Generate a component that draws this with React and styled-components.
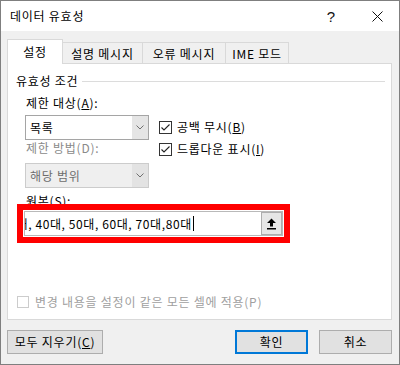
import React from 'react';
import styled, { createGlobalStyle } from 'styled-components';

const Global = createGlobalStyle`
  html, body { margin: 0; padding: 0; background: #ffffff; }
  body {
    font-family: "Noto Sans CJK KR", "Noto Sans", sans-serif;
    font-size: 12px;
    letter-spacing: 0.75px;
    color: #000;
  }
  * { box-sizing: border-box; }
`;

const Window = styled.div`
  width: 400px;
  height: 365px;
  border: 1px solid #7f7f7f;
  background: #f0f0f0;
  display: flex;
  flex-direction: column;
`;

const TitleBar = styled.div`
  height: 30px;
  background: #ffffff;
  display: flex;
  align-items: center;
  padding-left: 9px;
`;

const Title = styled.div`
  flex: 1;
  font-size: 12px;
  line-height: 16px;
`;

const TitleButton = styled.div`
  width: ${(p) => p.$w}px;
  height: 30px;
  display: flex;
  align-items: center;
  justify-content: center;
  font-family: "Liberation Sans", sans-serif;
  font-size: 15px;
  letter-spacing: 0;
  color: #111;
`;

const Body = styled.div`
  flex: 1;
  display: flex;
  flex-direction: column;
  padding: 8px 7px 0 6px;
`;

const TabStrip = styled.div`
  height: 24px;
  display: flex;
  align-items: flex-end;
  position: relative;
  z-index: 1;
`;

const Tab = styled.div`
  width: ${(p) => p.$w}px;
  height: ${(p) => (p.$active ? 25 : 21)}px;
  margin-bottom: ${(p) => (p.$active ? -1 : 0)}px;
  margin-left: ${(p) => (p.$first ? 0 : -1)}px;
  border: 1px solid #d9d9d9;
  border-bottom: none;
  background: ${(p) => (p.$active ? '#ffffff' : '#f0f0f0')};
  position: relative;
  z-index: ${(p) => (p.$active ? 2 : 1)};
  display: flex;
  align-items: center;
  justify-content: center;
  line-height: 16px;
  padding-top: ${(p) => (p.$active ? 0 : 1)}px;
  white-space: nowrap;
`;

const Panel = styled.div`
  height: 257px;
  border: 1px solid #d9d9d9;
  background: #ffffff;
  display: flex;
  flex-direction: column;
`;

const GroupHeader = styled.div`
  margin: 9px 6px 0 8px;
  height: 16px;
  display: flex;
  align-items: center;
  line-height: 16px;
`;

const GroupLine = styled.div`
  flex: 1;
  height: 1px;
  background: #dcdcdc;
  margin-left: 4px;
`;

const Row = styled.div`
  display: flex;
  margin-left: 17px;
`;

const LeftCol = styled.div`
  width: 124px;
  display: flex;
  flex-direction: column;
`;

const RightCol = styled.div`
  margin-left: 10px;
  display: flex;
  flex-direction: column;
`;

const FieldLabel = styled.div`
  line-height: 16px;
  height: 16px;
  padding-left: 1px;
  margin-top: ${(p) => p.$mt || 0}px;
  margin-left: ${(p) => p.$ml || 0}px;
  color: ${(p) => (p.$disabled ? '#8a8a8a' : '#000')};
  white-space: nowrap;
`;

const Key = styled.span`
  text-decoration: underline;
  text-underline-offset: 1px;
`;

const Combo = styled.div`
  height: 25px;
  margin-top: ${(p) => p.$mt || 0}px;
  border: 1px solid ${(p) => (p.$disabled ? '#cccccc' : '#a5a5a5')};
  background: ${(p) => (p.$disabled ? '#efefef' : '#ffffff')};
  display: flex;
`;

const ComboText = styled.div`
  flex: 1;
  padding-left: 4px;
  line-height: 23px;
  color: ${(p) => (p.$disabled ? '#6d6d6d' : '#000')};
`;

const ComboButton = styled.div`
  width: 16px;
  background: ${(p) => (p.$disabled ? '#e3e3e3' : '#e5e5e5')};
  display: flex;
  align-items: center;
  justify-content: center;
`;

const CheckRow = styled.label`
  display: flex;
  align-items: center;
  height: 16px;
  margin-top: ${(p) => p.$mt || 0}px;
  margin-left: ${(p) => p.$ml || 0}px;
  color: ${(p) => (p.$disabled ? '#a0a0a0' : '#000')};
  white-space: nowrap;
  line-height: 16px;
`;

const Box = styled.span`
  width: ${(p) => p.$size}px;
  height: ${(p) => p.$size}px;
  border: 1px solid ${(p) => (p.$disabled ? '#cccccc' : '#333333')};
  background: #ffffff;
  margin-right: ${(p) => p.$gap}px;
  display: flex;
  align-items: center;
  justify-content: center;
  flex: none;
`;

const RedFrame = styled.div`
  margin: -5px 0 0 9px;
  width: 273px;
  border: 6px solid #ff0000;
  padding: 1px;
  background: #ffffff;
  position: relative;
`;

const Input = styled.div`
  height: 25px;
  border: 1px solid #b9b9b9;
  display: flex;
`;

const InputText = styled.div`
  flex: 1;
  overflow: hidden;
  white-space: nowrap;
  line-height: 23px;
  display: flex;
  align-items: center;
`;

const Scrolled = styled.span`
  margin-left: -23px;
  letter-spacing: 0.6px;
  display: inline-flex;
  align-items: center;
`;

const Caret = styled.span`
  width: 1px;
  height: 15px;
  background: #000;
  margin-left: 1px;
`;

const UploadButton = styled.div`
  width: 21px;
  border: 1px solid #adadad;
  background: #e6e6e6;
  display: flex;
  align-items: center;
  justify-content: center;
`;

const Footer = styled.div`
  display: flex;
  margin-top: 10px;
`;

const Button = styled.div`
  width: ${(p) => p.$w}px;
  height: 24px;
  margin-left: ${(p) => p.$ml || '0px'};
  border: ${(p) => (p.$default ? '2px solid #0078d7' : '1px solid #adadad')};
  background: #e1e1e1;
  display: flex;
  align-items: center;
  justify-content: center;
  line-height: 16px;
  white-space: nowrap;
`;

const Chevron = () => (
  <svg width="8" height="5" viewBox="0 0 8 5">
    <path d="M0.5 0.5 L4 4 L7.5 0.5" fill="none" stroke="#707070" strokeWidth="1" />
  </svg>
);

const Check = () => (
  <svg width="11" height="11" viewBox="0 0 11 11">
    <path d="M1.5 5.5 L4 8 L9.5 2.5" fill="none" stroke="#222" strokeWidth="1.1" />
  </svg>
);

const UpArrow = () => (
  <svg width="11" height="12" viewBox="0 0 11 12">
    <path d="M5.5 0.5 L10 5 L7 5 L7 8.5 L4 8.5 L4 5 L1 5 Z" fill="#000" />
    <rect x="1" y="10" width="9" height="1.5" fill="#000" />
  </svg>
);

const CloseIcon = () => (
  <svg width="11" height="11" viewBox="0 0 11 11">
    <path d="M0.5 0.5 L10.5 10.5 M10.5 0.5 L0.5 10.5" stroke="#111" strokeWidth="1" />
  </svg>
);

export default function App() {
  return (
    <>
      <Global />
      <Window>
        <TitleBar>
          <Title>데이터 유효성</Title>
          <TitleButton $w={48}>?</TitleButton>
          <TitleButton $w={44}><CloseIcon /></TitleButton>
        </TitleBar>
        <Body>
          <TabStrip>
            <Tab $w={56} $active $first>설정</Tab>
            <Tab $w={81}>설명 메시지</Tab>
            <Tab $w={84}>오류 메시지</Tab>
            <Tab $w={64}>IME 모드</Tab>
          </TabStrip>
          <Panel>
            <GroupHeader>
              유효성 조건
              <GroupLine />
            </GroupHeader>
            <Row>
              <LeftCol>
                <FieldLabel $mt={6}>제한 대상(<Key>A</Key>):</FieldLabel>
                <Combo $mt={4}>
                  <ComboText>목록</ComboText>
                  <ComboButton><Chevron /></ComboButton>
                </Combo>
                <FieldLabel $disabled>제한 방법(D):</FieldLabel>
                <Combo $mt={7} $disabled>
                  <ComboText $disabled>해당 범위</ComboText>
                  <ComboButton $disabled><Chevron /></ComboButton>
                </Combo>
              </LeftCol>
              <RightCol>
                <CheckRow $mt={30}>
                  <Box $size={13} $gap={5}><Check /></Box>
                  공백 무시(<Key>B</Key>)
                </CheckRow>
                <CheckRow $mt={6}>
                  <Box $size={13} $gap={5}><Check /></Box>
                  드롭다운 표시(<Key>I</Key>)
                </CheckRow>
              </RightCol>
            </Row>
            <FieldLabel $mt={5} $ml={17}>원본(<Key>S</Key>):</FieldLabel>
            <RedFrame>
              <Input>
                <InputText>
                  <Scrolled>
                    30대, 40대, 50대, 60대, 70대,80대
                    <Caret />
                  </Scrolled>
                </InputText>
                <UploadButton><UpArrow /></UploadButton>
              </Input>
            </RedFrame>
            <CheckRow $mt={51} $ml={9} $disabled>
              <Box $size={12} $gap={6} $disabled />
              변경 내용을 설정이 같은 모든 셀에 적용(P)
            </CheckRow>
          </Panel>
          <Footer>
            <Button $w={96}>모두 지우기(<Key>C</Key>)</Button>
            <Button $w={73} $ml="auto" $default>확인</Button>
            <Button $w={73} $ml="11px">취소</Button>
          </Footer>
        </Body>
      </Window>
    </>
  );
}
